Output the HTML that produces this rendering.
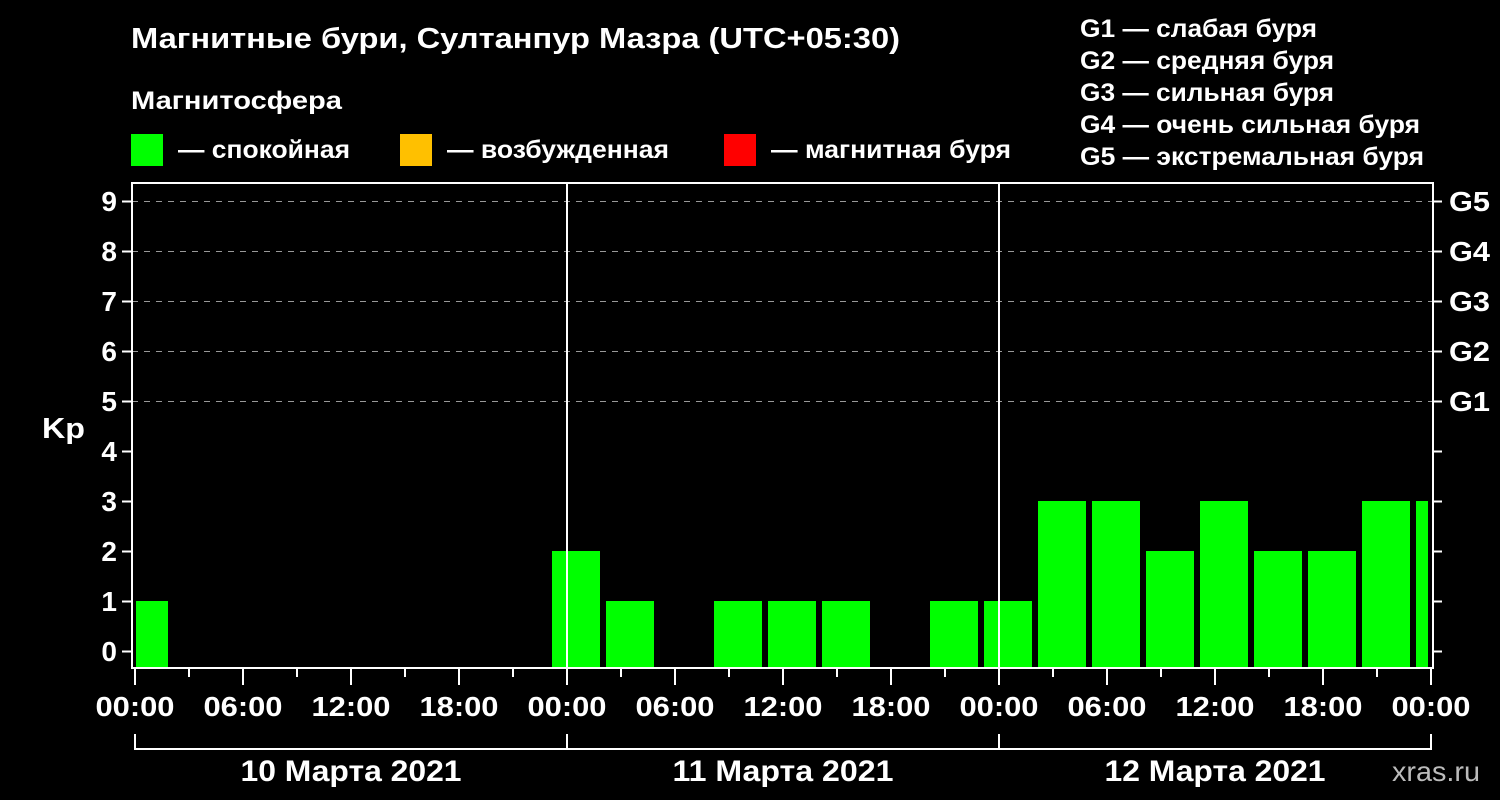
<!DOCTYPE html><html><head><meta charset="utf-8"><style>body{margin:0;background:#000;width:1500px;height:800px;overflow:hidden}svg{display:block}text{font-family:"Liberation Sans",sans-serif;font-weight:bold;fill:#fff}</style></head><body>
<svg width="1500" height="800" xmlns="http://www.w3.org/2000/svg">
<text x="131" y="48" font-size="29" textLength="769" lengthAdjust="spacingAndGlyphs">Магнитные бури, Султанпур Мазра (UTC+05:30)</text>
<text x="131" y="109" font-size="25" textLength="211" lengthAdjust="spacingAndGlyphs">Магнитосфера</text>
<rect x="131" y="134" width="32" height="32" fill="#00ff00"/><text x="178" y="158" font-size="25" textLength="172" lengthAdjust="spacingAndGlyphs">— спокойная</text>
<rect x="400" y="134" width="32" height="32" fill="#ffc000"/><text x="447" y="158" font-size="25" textLength="222" lengthAdjust="spacingAndGlyphs">— возбужденная</text>
<rect x="724" y="134" width="32" height="32" fill="#ff0000"/><text x="771" y="158" font-size="25" textLength="240" lengthAdjust="spacingAndGlyphs">— магнитная буря</text>
<g font-size="25"><text x="1080" y="37" textLength="237" lengthAdjust="spacingAndGlyphs">G1 — слабая буря</text><text x="1080" y="69" textLength="254" lengthAdjust="spacingAndGlyphs">G2 — средняя буря</text><text x="1080" y="101" textLength="254" lengthAdjust="spacingAndGlyphs">G3 — сильная буря</text><text x="1080" y="133" textLength="340" lengthAdjust="spacingAndGlyphs">G4 — очень сильная буря</text><text x="1080" y="165" textLength="344" lengthAdjust="spacingAndGlyphs">G5 — экстремальная буря</text></g>
<g stroke="#999" stroke-width="1" stroke-dasharray="6,6">
<line x1="132" y1="201.5" x2="1432" y2="201.5"/><line x1="132" y1="251.5" x2="1432" y2="251.5"/><line x1="132" y1="301.5" x2="1432" y2="301.5"/><line x1="132" y1="351.5" x2="1432" y2="351.5"/><line x1="132" y1="401.5" x2="1432" y2="401.5"/></g>
<g fill="#00ff00">
<rect x="136" y="601" width="32" height="67"/>
<rect x="552" y="551" width="48" height="117"/>
<rect x="606" y="601" width="48" height="67"/>
<rect x="714" y="601" width="48" height="67"/>
<rect x="768" y="601" width="48" height="67"/>
<rect x="822" y="601" width="48" height="67"/>
<rect x="930" y="601" width="48" height="67"/>
<rect x="984" y="601" width="48" height="67"/>
<rect x="1038" y="501" width="48" height="167"/>
<rect x="1092" y="501" width="48" height="167"/>
<rect x="1146" y="551" width="48" height="117"/>
<rect x="1200" y="501" width="48" height="167"/>
<rect x="1254" y="551" width="48" height="117"/>
<rect x="1308" y="551" width="48" height="117"/>
<rect x="1362" y="501" width="48" height="167"/>
<rect x="1416" y="501" width="12" height="167"/>
</g>
<g stroke="#fff" stroke-width="2" fill="none">
<path d="M132 668 V183 H1433 V668 Z"/>
<line x1="567" y1="183" x2="567" y2="668"/><line x1="999" y1="183" x2="999" y2="668"/>
<path d="M122 201.5h10M122 251.5h10M122 301.5h10M122 351.5h10M122 401.5h10M122 451.5h10M122 501.5h10M122 551.5h10M122 601.5h10M122 651.5h10"/>
<path d="M1433 201.5h9M1433 251.5h9M1433 301.5h9M1433 351.5h9M1433 401.5h9M1433 451.5h9M1433 501.5h9M1433 551.5h9M1433 601.5h9M1433 651.5h9"/>
<path d="M135 668v17M243 668v17M351 668v17M459 668v17M567 668v17M675 668v17M783 668v17M891 668v17M999 668v17M1107 668v17M1215 668v17M1323 668v17M1431 668v17"/>
<path d="M189 668v9M297 668v9M405 668v9M513 668v9M621 668v9M729 668v9M837 668v9M945 668v9M1053 668v9M1161 668v9M1269 668v9M1377 668v9"/>
<path d="M135 734v15H1431v-15M567 734v15M999 734v15"/>
</g>
<g font-size="28" text-anchor="end"><text x="117" y="211">9</text><text x="117" y="261">8</text><text x="117" y="311">7</text><text x="117" y="361">6</text><text x="117" y="411">5</text><text x="117" y="461">4</text><text x="117" y="511">3</text><text x="117" y="561">2</text><text x="117" y="611">1</text><text x="117" y="661">0</text></g>
<text x="42" y="438" font-size="29" textLength="43" lengthAdjust="spacingAndGlyphs">Kp</text>
<g font-size="28"><text x="1449" y="211" textLength="41" lengthAdjust="spacingAndGlyphs">G5</text><text x="1449" y="261" textLength="41" lengthAdjust="spacingAndGlyphs">G4</text><text x="1449" y="311" textLength="41" lengthAdjust="spacingAndGlyphs">G3</text><text x="1449" y="361" textLength="41" lengthAdjust="spacingAndGlyphs">G2</text><text x="1449" y="411" textLength="41" lengthAdjust="spacingAndGlyphs">G1</text></g>
<g font-size="28" text-anchor="middle"><text x="135" y="716" textLength="79" lengthAdjust="spacingAndGlyphs">00:00</text><text x="243" y="716" textLength="79" lengthAdjust="spacingAndGlyphs">06:00</text><text x="351" y="716" textLength="79" lengthAdjust="spacingAndGlyphs">12:00</text><text x="459" y="716" textLength="79" lengthAdjust="spacingAndGlyphs">18:00</text><text x="567" y="716" textLength="79" lengthAdjust="spacingAndGlyphs">00:00</text><text x="675" y="716" textLength="79" lengthAdjust="spacingAndGlyphs">06:00</text><text x="783" y="716" textLength="79" lengthAdjust="spacingAndGlyphs">12:00</text><text x="891" y="716" textLength="79" lengthAdjust="spacingAndGlyphs">18:00</text><text x="999" y="716" textLength="79" lengthAdjust="spacingAndGlyphs">00:00</text><text x="1107" y="716" textLength="79" lengthAdjust="spacingAndGlyphs">06:00</text><text x="1215" y="716" textLength="79" lengthAdjust="spacingAndGlyphs">12:00</text><text x="1323" y="716" textLength="79" lengthAdjust="spacingAndGlyphs">18:00</text><text x="1431" y="716" textLength="79" lengthAdjust="spacingAndGlyphs">00:00</text></g>
<g font-size="30" text-anchor="middle"><text x="351" y="781" textLength="221" lengthAdjust="spacingAndGlyphs">10 Марта 2021</text><text x="783" y="781" textLength="221" lengthAdjust="spacingAndGlyphs">11 Марта 2021</text><text x="1215" y="781" textLength="221" lengthAdjust="spacingAndGlyphs">12 Марта 2021</text></g>
<text x="1436" y="781" font-size="28" text-anchor="middle" textLength="88" lengthAdjust="spacingAndGlyphs" style="fill:#bbb;font-weight:normal">xras.ru</text>
</svg></body></html>
